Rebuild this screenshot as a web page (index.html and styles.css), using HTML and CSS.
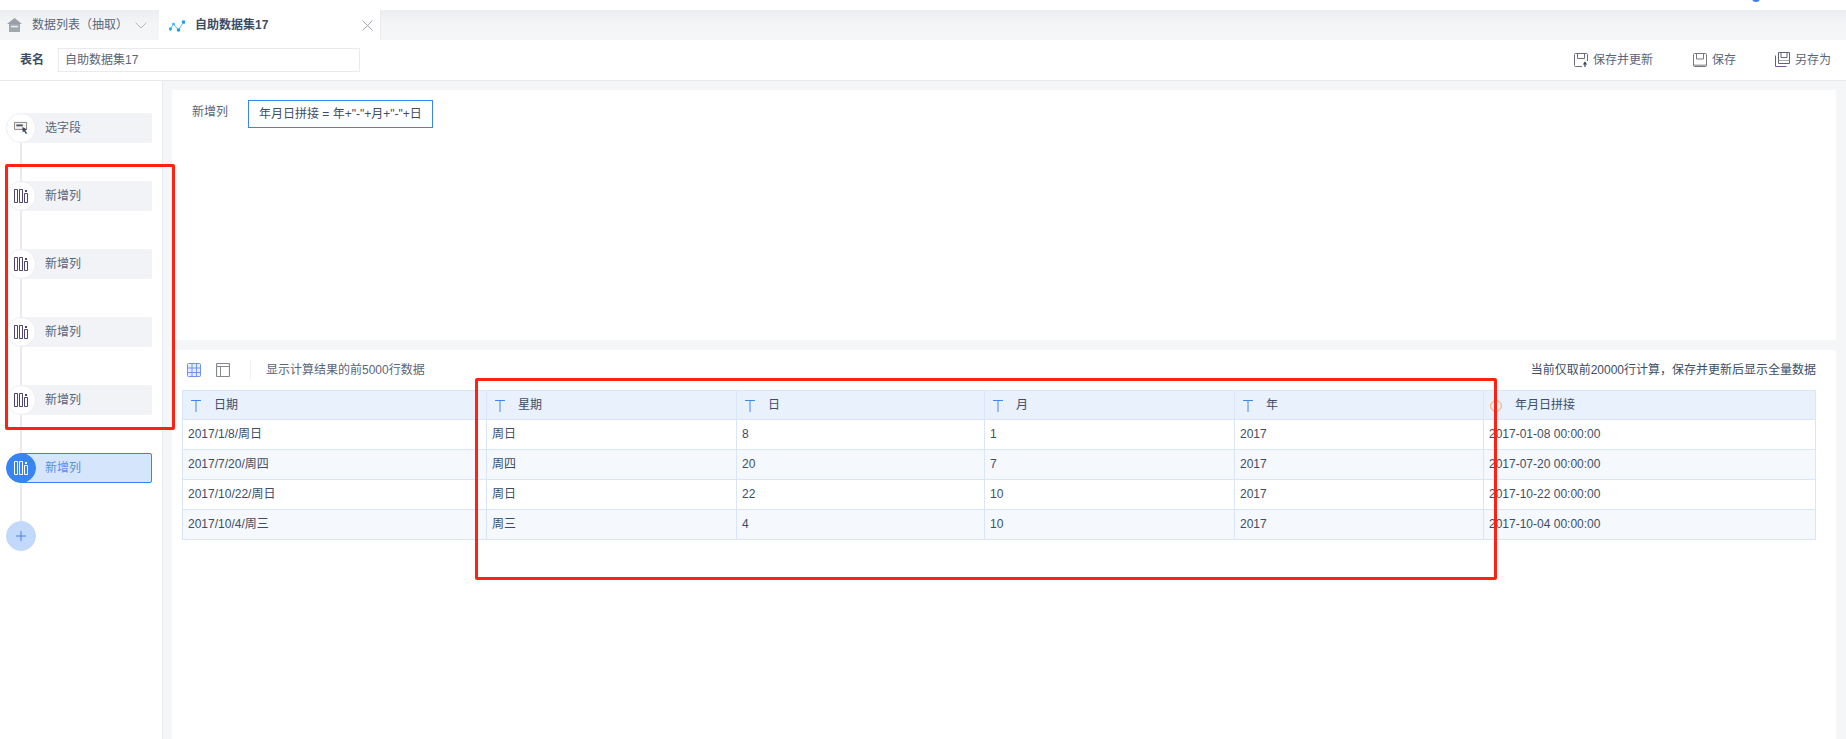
FILE: index.html
```html
<!DOCTYPE html>
<html lang="zh-CN">
<head>
<meta charset="utf-8">
<title>自助数据集17</title>
<link rel="stylesheet" href="styles.css">
</head>
<body>
<svg class="defs" width="0" height="0" aria-hidden="true">
  <symbol id="i-col" viewBox="0 0 14 14">
    <path d="M.5.500h3v13h-3zM5.500.500h3v13h-3zM10.500 4.500h3v9h-3z" fill="none" stroke="currentColor"/>
    <path d="M11 1h2v2h-2z" fill="currentColor"/>
  </symbol>
</svg>

<div class="top-strip"><span class="top-dot"></span></div>

<div class="tabs">
  <div class="tab tab-list">
    <svg class="tab-home" width="15" height="14" viewBox="0 0 15 14"><path d="M7.500 0 0 6h15z" fill="#9a9ea6"/><path d="M2 6h11v8H2z" fill="#a3a7ae"/><path d="M4 7.800h7v1.500H4z" fill="#eef0f2"/></svg>
    <span class="tab-text">数据列表（抽取）</span>
    <svg class="tab-chevron" width="12" height="7" viewBox="0 0 12 7"><path d="M.5.5 6 6l5.500-5.500" fill="none" stroke="#b4b8be"/></svg>
  </div>
  <div class="tab tab-active">
    <svg class="tab-chart" width="16" height="12" viewBox="0 0 16 12"><path d="M1.500 9 4.500 4l5 6 5-8" fill="none" stroke="#4db4ee" stroke-width=".9"/><circle cx="1.500" cy="9" r="1.700" fill="#2cb5f0"/><circle cx="4.500" cy="4" r="1.300" fill="#2cb5f0"/><circle cx="9.500" cy="10" r="1.800" fill="#1f9cf0"/><circle cx="14.500" cy="2" r="1.800" fill="#1f9cf0"/></svg>
    <span class="tab-text tab-title">自助数据集17</span>
    <svg class="tab-close" width="11" height="11" viewBox="0 0 11 11"><path d="m.5.500 10 10m0-10-10 10" fill="none" stroke="#a3a8af"/></svg>
  </div>
</div>

<div class="toolbar">
  <label class="name-label">表名</label>
  <div class="name-input">自助数据集17</div>
  <div class="actions">
    <span class="action action-update">
      <svg width="14" height="14" viewBox="0 0 14 14"><path d="M8 13.500H1.500a1 1 0 0 1-1-1v-11a1 1 0 0 1 1-1h11a1 1 0 0 1 1 1V8" fill="none" stroke="#6f6a78"/><path d="M3.500 1v4.500h7V1" fill="none" stroke="#6f6a78"/><path d="M11 14V9.500" fill="none" stroke="#33415c" stroke-width="1.200"/><path d="m8.800 11.500 2.200-3 2.200 3z" fill="#33415c"/></svg>
      保存并更新
    </span>
    <span class="action action-save">
      <svg width="14" height="14" viewBox="0 0 14 14"><rect x=".5" y=".5" width="13" height="13" rx="1" fill="none" stroke="#7b7684"/><path d="M3.500 1v5h7V1" fill="none" stroke="#7b7684"/><path d="M1 11.500h12V13H1z" fill="#a9a6ae"/></svg>
      保存
    </span>
    <span class="action action-as">
      <svg width="15" height="15" viewBox="0 0 15 15"><path d="M3.500 .5h11v11h-11z" fill="none" stroke="#5f6272"/><path d="M6 1v4.500h6V1" fill="none" stroke="#5f6272"/><path d="M3.500 8.500h11" fill="none" stroke="#a9a6ae"/><path d="M.5 3.500v11h11" fill="none" stroke="#7a4f9a"/></svg>
      另存为
    </span>
  </div>
</div>

<div class="workspace">
  <aside class="sidebar">
    <div class="steps">
      <div class="step">
        <span class="step-icon">
          <svg width="14" height="14" viewBox="0 0 15 14"><path d="M.5 1h13v7.500H.5z" fill="#f6f2ee" stroke="#8a7f78"/><path d="M2.500 3.200h7v2h-7z" fill="#4d5568"/><path d="m9 6 5 2.500-2 1 2 3-1.300.8-2-3-1.400 1.700z" fill="#34445e"/></svg>
        </span>
        <span class="step-chip">选字段</span>
      </div>
      <div class="step"><span class="step-icon"><svg class="col-icon" width="14" height="14"><use href="#i-col"/></svg></span><span class="step-chip">新增列</span></div>
      <div class="step"><span class="step-icon"><svg class="col-icon" width="14" height="14"><use href="#i-col"/></svg></span><span class="step-chip">新增列</span></div>
      <div class="step"><span class="step-icon"><svg class="col-icon" width="14" height="14"><use href="#i-col"/></svg></span><span class="step-chip">新增列</span></div>
      <div class="step"><span class="step-icon"><svg class="col-icon" width="14" height="14"><use href="#i-col"/></svg></span><span class="step-chip">新增列</span></div>
      <div class="step step-active"><span class="step-icon"><svg class="col-icon" width="14" height="14"><use href="#i-col"/></svg></span><span class="step-chip">新增列</span></div>
      <div class="step step-add">
        <span class="step-icon">
          <svg width="10" height="10" viewBox="0 0 10 10"><path d="M5 0v10M0 5h10" stroke="#4a80e0" fill="none"/></svg>
        </span>
      </div>
    </div>
  </aside>

  <main class="content">
    <section class="panel panel-form">
      <span class="form-label">新增列</span>
      <div class="form-input">年月日拼接 = 年+"-"+月+"-"+日</div>
    </section>

    <section class="panel panel-data">
      <div class="data-bar">
        <svg class="view-icon" width="14" height="14" viewBox="0 0 14 14"><rect x=".5" y=".5" width="13" height="13" rx="1" fill="#e7edff" stroke="#6e93f0"/><path d="M5 1v12M9.500 1v12M1 5h12M1 9.500h12" stroke="#6e93f0" fill="none"/></svg>
        <svg class="view-icon view-second" width="14" height="14" viewBox="0 0 14 14"><rect x=".5" y=".5" width="13" height="13" rx="1" fill="none" stroke="#85888d" stroke-width="1.200"/><path d="M1 3.500h12M4.500 4v9" stroke="#85888d" fill="none"/></svg>
        <span class="bar-divider"></span>
        <span class="bar-text">显示计算结果的前5000行数据</span>
        <span class="bar-note">当前仅取前20000行计算，保存并更新后显示全量数据</span>
      </div>

      <table class="grid">
        <colgroup>
          <col class="c1"><col class="c2"><col class="c3"><col class="c4"><col class="c5"><col class="c6">
        </colgroup>
        <thead>
          <tr>
            <th><svg class="th-icon" width="10" height="12" viewBox="0 0 10 12"><path d="M0 .5h10M5 .5V12" stroke="#3f88f0" fill="none"/></svg>日期</th>
            <th><svg class="th-icon" width="10" height="12" viewBox="0 0 10 12"><path d="M0 .5h10M5 .5V12" stroke="#3f88f0" fill="none"/></svg>星期</th>
            <th><svg class="th-icon" width="10" height="12" viewBox="0 0 10 12"><path d="M0 .5h10M5 .5V12" stroke="#3f88f0" fill="none"/></svg>日</th>
            <th><svg class="th-icon" width="10" height="12" viewBox="0 0 10 12"><path d="M0 .5h10M5 .5V12" stroke="#3f88f0" fill="none"/></svg>月</th>
            <th><svg class="th-icon" width="10" height="12" viewBox="0 0 10 12"><path d="M0 .5h10M5 .5V12" stroke="#3f88f0" fill="none"/></svg>年</th>
            <th><svg class="th-icon th-icon-calc" width="12" height="12" viewBox="0 0 12 12"><circle cx="6" cy="6" r="5.400" fill="none" stroke="#f5a665"/></svg>年月日拼接</th>
          </tr>
        </thead>
        <tbody>
          <tr><td>2017/1/8/周日</td><td>周日</td><td>8</td><td>1</td><td>2017</td><td>2017-01-08 00:00:00</td></tr>
          <tr><td>2017/7/20/周四</td><td>周四</td><td>20</td><td>7</td><td>2017</td><td>2017-07-20 00:00:00</td></tr>
          <tr><td>2017/10/22/周日</td><td>周日</td><td>22</td><td>10</td><td>2017</td><td>2017-10-22 00:00:00</td></tr>
          <tr><td>2017/10/4/周三</td><td>周三</td><td>4</td><td>10</td><td>2017</td><td>2017-10-04 00:00:00</td></tr>
        </tbody>
      </table>
    </section>
  </main>
</div>

<div class="mark mark-steps"></div>
<div class="mark mark-table"></div>
</body>
</html>
```

FILE: styles.css
```css
* { box-sizing: border-box; }

html, body {
  margin: 0;
  padding: 0;
}

body {
  position: relative;
  width: 1846px;
  height: 739px;
  overflow: hidden;
  background: #fff;
  color: #3d4d66;
  font: 12px/1 "Liberation Sans", "Noto Sans CJK SC", sans-serif;
}

.defs { position: absolute; }

.top-strip {
  position: relative;
  height: 10px;
  background: #fff;
}

.top-dot {
  position: absolute;
  left: 1752px;
  top: -6px;
  width: 8px;
  height: 8px;
  border-radius: 50%;
  background: #3a7df0;
}

.tabs {
  display: flex;
  height: 30px;
  background: linear-gradient(#ecedf0, #f4f5f7 45%, #f5f6f8);
}

.tab {
  display: flex;
  align-items: center;
  height: 30px;
}

.tab-list {
  width: 159px;
  padding-left: 7px;
}

.tab-text { color: #596579; }

.tab-list .tab-text { margin-left: 10px; width: 103px; white-space: nowrap; }

.tab-active {
  width: 222px;
  padding: 2px 0 0 10px;
  background: #fff;
  border-right: 1px solid #e8eaed;
}

.tab-title {
  margin: -2px 0 0 10px;
  color: #3d4d66;
  font-weight: 700;
}

.tab-close { margin: -2px 7px 0 auto; }

.toolbar {
  display: flex;
  align-items: center;
  height: 41px;
  padding: 0 15px 1px 20px;
  background: #fff;
  border-bottom: 1px solid #e8eaed;
}

.name-label {
  width: 38px;
  font-weight: 700;
  color: #3d4d66;
}

.name-input {
  display: flex;
  align-items: center;
  width: 302px;
  height: 24px;
  padding-left: 6px;
  border: 1px solid #e8eaed;
  color: #596579;
}

.actions {
  display: flex;
  margin-left: auto;
}

.action {
  display: flex;
  align-items: center;
  gap: 5px;
  color: #596579;
  white-space: nowrap;
}

.action-save { margin-left: 40px; }
.action-as { margin-left: 39px; }

.workspace {
  display: flex;
  height: 658px;
  background: #f5f6f8;
}

.sidebar {
  flex: none;
  width: 163px;
  padding: 32px 0 0 6px;
  background: #fff;
  border-right: 1px solid #e8eaed;
}

.steps {
  position: relative;
  display: flex;
  flex-direction: column;
  gap: 38px;
}

.steps::before {
  content: "";
  position: absolute;
  left: 14px;
  top: 20px;
  bottom: 20px;
  width: 2px;
  background: #e8eaed;
}

.step {
  position: relative;
  display: flex;
  height: 30px;
}

.step-icon {
  position: relative;
  z-index: 1;
  display: flex;
  flex: none;
  align-items: center;
  justify-content: center;
  width: 30px;
  height: 30px;
  border: 1px solid #eceef1;
  border-radius: 50%;
  background: #fff;
  color: #4f4470;
}

.step-chip {
  display: flex;
  align-items: center;
  width: 132px;
  height: 30px;
  margin-left: -16px;
  padding-left: 25px;
  border-radius: 2px;
  background: #f2f3f7;
  color: #596579;
}

.step-active .step-icon {
  border-color: #3685f2;
  background: #3685f2;
  color: #fff;
}

.step-active .step-chip {
  border: 1px solid #3685f2;
  background: #d5e5fc;
  color: #5a8fe8;
  padding-left: 24px;
}

.step-add .step-icon {
  border-color: #c2d9fb;
  background: #c2d9fb;
}

.content {
  display: flex;
  flex: 1;
  flex-direction: column;
  gap: 10px;
  padding: 9px 10px 0 9px;
}

.panel { background: #fff; }

.panel-form {
  display: flex;
  flex: none;
  align-items: flex-start;
  height: 250px;
  padding: 10px 0 0 20px;
}

.form-label {
  width: 56px;
  line-height: 24px;
  color: #596579;
}

.form-input {
  display: flex;
  align-items: center;
  width: 185px;
  height: 28px;
  padding-left: 10px;
  border: 1px solid #3685f2;
  color: #3d4d66;
  white-space: nowrap;
}

.panel-data {
  flex: 1;
  padding: 0 20px 0 10px;
}

.data-bar {
  display: flex;
  align-items: center;
  height: 40px;
  padding-left: 5px;
}

.view-second { margin-left: 15px; }

.bar-divider {
  width: 1px;
  height: 20px;
  margin: 0 15px 0 20px;
  background: #eff1f3;
}

.bar-text { color: #596579; }

.bar-note {
  margin-left: auto;
  color: #3d4d66;
}

.grid {
  width: 1633px;
  table-layout: fixed;
  border-collapse: collapse;
}

.c1 { width: 304px; }
.c2 { width: 250px; }
.c3 { width: 248px; }
.c4 { width: 250px; }
.c5 { width: 249px; }
.c6 { width: 332px; }

.grid th,
.grid td {
  height: 30px;
  padding: 0 0 2px 5px;
  border: 1px solid #d9e6f9;
  color: #3d4d66;
  font-weight: 400;
  text-align: left;
  white-space: nowrap;
}

.grid th {
  height: 29px;
  padding-bottom: 0;
  background: #e9f1fd;
}

.th-icon {
  margin: 0 13px 0 3px;
  vertical-align: -3px;
}

.grid th .th-icon-calc { margin: 0 13px 0 1px; }

.grid tbody tr:nth-child(even) td { background: #f5f8fd; }

.mark {
  position: absolute;
  z-index: 2;
  border: 3px solid #ff2212;
  border-radius: 2px;
}

.mark-steps {
  left: 5px;
  top: 164px;
  width: 170px;
  height: 266px;
}

.mark-table {
  left: 475px;
  top: 378px;
  width: 1022px;
  height: 202px;
}
```
